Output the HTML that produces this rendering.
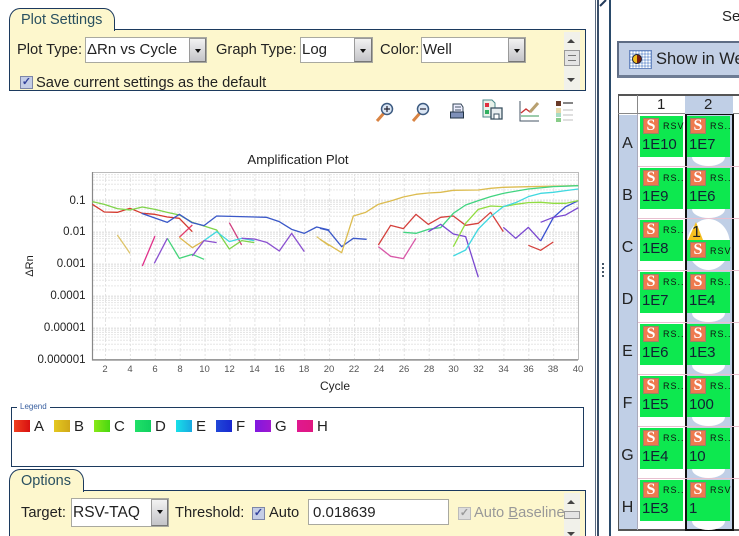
<!DOCTYPE html>
<html><head><meta charset="utf-8"><style>
html,body{margin:0;padding:0;background:#fff}
#p{position:relative;width:739px;height:536px;overflow:hidden;background:#fff;font-family:"Liberation Sans",sans-serif;color:#222;font-size:14.7px}
#p div,#p span.a{position:absolute;white-space:nowrap;box-sizing:border-box}
.panel{background:#fdf7cd;border:1px solid #1c3a5e}
.tab{background:#fdf7cd;border:1px solid #1c3a5e;border-bottom:none;border-radius:11px 11px 0 0/12px 12px 0 0;color:#2a5060;padding:3px 0 0 11px;font-size:14.5px}
.combo{background:#fff;border:1px solid #a9a9a0;padding:3px 0 0 1px;font-size:15px;color:#222}
.btn{background:linear-gradient(#f2f2f2,#c4c4c8);border:1px solid #9a9a9a;border-right-color:#777;border-bottom-color:#777}
.btn:after{content:"";position:absolute;left:5px;top:10px;border:3px solid transparent;border-top:4px solid #111}
.chk{width:13px;height:13px;background:#c4cde6;border:1px solid #7d86a8;color:#33429a;font-size:11px;line-height:11px;text-align:center;font-weight:bold}
.t{font-size:14.7px;color:#222}
.sw{width:16px;height:12px}
.well{background:#0de84f;width:43px;height:41px}
.s{width:16px;height:16px;left:3px;top:2px;background:#ee7a4f;border:1px solid #a08068;color:#fff;font:bold 16px/14px "Liberation Serif",serif;text-align:center}
.r{left:23px;top:5px;font-size:9px;letter-spacing:1px;color:#111}
.n{left:2px;top:20px;font-size:15px;letter-spacing:-.1px;color:#123}
.hole{width:33px;height:9px;background:#fff;border-radius:0 0 50% 50%/0 0 100% 100%}
.row{font-size:16px;color:#222;left:618px;width:19px;text-align:center}
</style></head><body><div id="p">

<!-- Plot settings -->
<div class="tab" style="left:9px;top:8px;width:106px;height:23px;z-index:2">Plot Settings</div>
<div class="panel" style="left:9px;top:29px;width:577px;height:62px;overflow:hidden">
 <div class="t" style="left:7px;top:12px">Plot Type:</div>
 <div class="combo" style="left:75px;top:7px;width:122px;height:26px">ΔRn vs Cycle</div>
 <div class="btn" style="left:179px;top:8px;width:17px;height:24px"></div>
 <div class="t" style="left:206px;top:12px">Graph Type:</div>
 <div class="combo" style="left:290px;top:7px;width:73px;height:26px">Log</div>
 <div class="btn" style="left:344px;top:8px;width:18px;height:24px"></div>
 <div class="t" style="left:370px;top:12px">Color:</div>
 <div class="combo" style="left:411px;top:7px;width:105px;height:26px">Well</div>
 <div class="btn" style="left:498px;top:8px;width:17px;height:24px"></div>
 <div class="chk" style="left:10px;top:46px">✓</div>
 <div class="t" style="left:26px;top:45px">Save current settings as the default</div>
 <div style="left:554px;top:2px;width:16px;height:58px;background:#f1f1ea"></div>
 <div style="left:557px;top:9px;border:4px solid transparent;border-bottom:4px solid #444;border-top:none"></div>
 <div style="left:554px;top:20px;width:16px;height:16px;background:#e4e4e4;border:1px solid #999"></div>
 <div style="left:558px;top:25px;width:8px;height:6px;border-top:1px solid #777;border-bottom:1px solid #777"></div>
 <div style="left:557px;top:48px;border:4px solid transparent;border-top:4px solid #444;border-bottom:none"></div>
</div>

<!-- toolbar icons -->
<svg style="position:absolute;left:370px;top:95px" width="210" height="32" viewBox="0 0 210 32">
 <g fill="none">
  <path d="M7 26L14 18" stroke="#d98444" stroke-width="3"/><circle cx="17" cy="14" r="5.5" fill="#dbe6f4" stroke="#3c5a80" stroke-width="1.5"/><path d="M14 14h6M17 11v6" stroke="#223" stroke-width="1.2"/>
  <path d="M43 26L50 18" stroke="#d98444" stroke-width="3"/><circle cx="53" cy="14" r="5.5" fill="#dbe6f4" stroke="#3c5a80" stroke-width="1.5"/><path d="M50 14h6" stroke="#223" stroke-width="1.2"/>
  <path d="M83 9h8l2 3v5h-10z" fill="#eef" stroke="#345"/><rect x="80.500" y="17" width="13" height="6" fill="#7e90b8" stroke="#234"/><path d="M85 12h6M85 15h6" stroke="#456"/>
  <path d="M113 5h9l3 3v14h-12z" fill="#e8f2ea" stroke="#4a8a8a"/><rect x="115" y="8" width="4" height="4" fill="#e03040"/><rect x="115" y="15" width="4" height="4" fill="#30b060"/>
  <rect x="121" y="13" width="11" height="11" fill="#e8eef0" stroke="#3a5060" stroke-width="1.3"/><rect x="124" y="19" width="5" height="5" fill="#fff" stroke="#3a5060"/>
  <path d="M150 6v20h19" stroke="#456" stroke-width="1"/><path d="M151 21h18" stroke="#3a9a5a"/><path d="M151 18l5-4 4 3 3-2" stroke="#c83030" stroke-width="1.3"/><path d="M160 17l8-9" stroke="#b8a070" stroke-width="3"/>
  <rect x="186" y="6" width="5" height="5" fill="#6a3a28" stroke="none"/><rect x="186" y="13" width="5" height="5" fill="#e6d8a8" stroke="none"/><rect x="186" y="18" width="5" height="4" fill="#a8dcc4" stroke="none"/><rect x="186" y="23" width="5" height="4" fill="#88cc88" stroke="none"/>
  <path d="M193 8h10" stroke="#333" stroke-width="1.2"/><path d="M193 15h10M193 20h10M193 25h10" stroke="#ccc" stroke-width="1.2"/>
 </g>
</svg>

<!-- plot -->
<svg style="position:absolute;left:0;top:150px" width="596" height="250" viewBox="0 150 596 250" font-family="Liberation Sans, sans-serif" font-size="11.5" fill="#222">
 <defs>
  <pattern id="gy" patternUnits="userSpaceOnUse" x="0" y="199.5" width="6" height="32">
   <g stroke="#e6e6e6" stroke-width="1" stroke-dasharray="2 1">
    <path d="M0 0.5H6M0 1.5H6M0 3.1H6M0 5H6M0 7.1H6M0 9.6H6M0 12.7H6M0 16.7H6M0 22.4H6"/>
   </g>
  </pattern>
  <pattern id="gx" patternUnits="userSpaceOnUse" x="105" y="0" width="24.9" height="10">
   <path d="M0.5 0V10" stroke="#e2e2e2" stroke-dasharray="2 2"/>
  </pattern>
 </defs>
 <rect x="93" y="172" width="485" height="187" fill="url(#gy)"/>
 <rect x="93" y="172" width="485" height="187" fill="url(#gx)"/>
 <path d="M92.5 172.5H578.5V359.5H92.5Z" fill="none" stroke="#bbb"/>
 <path d="M92.5 172V360H578" fill="none" stroke="#888" stroke-width="1.2"/>
 <g text-anchor="end">
  <text x="85.500" y="204">0.1</text><text x="85.500" y="235">0.01</text><text x="85.500" y="267">0.001</text><text x="85.500" y="299">0.0001</text><text x="85.500" y="331">0.00001</text><text x="85.500" y="363">0.000001</text>
 </g>
 <g text-anchor="middle" font-size="9.5" fill="#555">
  <text x="105" y="372">2</text><text x="130" y="372">4</text><text x="155" y="372">6</text><text x="180" y="372">8</text><text x="204.500" y="372">10</text><text x="229.500" y="372">12</text><text x="254.500" y="372">14</text><text x="279.500" y="372">16</text><text x="304" y="372">18</text><text x="329" y="372">20</text><text x="354" y="372">22</text><text x="379" y="372">24</text><text x="404" y="372">26</text><text x="429" y="372">28</text><text x="453.500" y="372">30</text><text x="478.500" y="372">32</text><text x="503.500" y="372">34</text><text x="528.500" y="372">36</text><text x="553" y="372">38</text><text x="578" y="372">40</text>
 </g>
 <text x="335" y="390" text-anchor="middle" font-size="12">Cycle</text>
 <text x="298" y="164" text-anchor="middle" font-size="13.200">Amplification Plot</text>
 <text transform="translate(33,266) rotate(-90)" text-anchor="middle" font-size="11">ΔRn</text>
 <g fill="none" stroke-width="3.900" transform="translate(60,150) scale(.3333)" style="stroke-linejoin:round">
  <polyline stroke="#d4392e" points="97,163 133,186 172,187 210,175 247,190 285,193 322,201 358,205 397,245"/>
  <polyline stroke="#e23c6a" points="358,262 397,225"/>
  <polyline stroke="#e0308a" points="247,348 285,258"/>
  <polyline stroke="#d04080" points="508,218 545,285"/>
  <polyline stroke="#ddc46a" points="172,255 210,310"/>
  <polyline stroke="#dcb850" points="358,262 397,293 432,272"/>
  <polyline stroke="#ddc46a" points="770,260 808,288"/>
  <polyline stroke="#7fd44a" points="97,155 133,163 172,176 210,180 247,171 285,178 322,187 358,195 397,217 432,228 470,240 508,297 545,272 583,278"/>
  <polyline stroke="#44d47a" points="322,265 358,325 397,313 432,328"/>
  <polyline stroke="#40d8e0" points="432,272 470,245 508,275 545,265 583,272"/>
  <polyline stroke="#3a58c8" points="245,190 322,217 358,193 396,218 432,227 470,198 620,202 658,215 695,238 733,250 770,231 808,240"/>
  <polyline stroke="#8a50d0" points="283,340 322,265"/>
  <polyline stroke="#8a50d0" points="397,318 432,272 470,278"/>
  <polyline stroke="#8a50d0" points="545,265 583,267 620,277 658,303 695,250 733,305"/>
 </g>
 <g fill="none" stroke-width="3.900" transform="translate(320,150) scale(.3333)" style="stroke-linejoin:round">
  <polyline stroke="#3a58c8" points="0,235 25,241 65,290 100,265 140,268"/>
  <polyline stroke="#dcbc50" points="0,268 65,308 100,198 137,187 175,163 212,153 250,141 288,133 325,129 362,127 400,121 475,120 512,115 550,112 625,110 775,107"/>
  <polyline stroke="#d4403c" points="175,285 212,226 250,236 288,193 325,223 362,202 400,198 437,226 475,220 512,187 550,245"/>
  <polyline stroke="#d4403c" points="625,286 662,301 700,276"/>
  <polyline stroke="#d858a8" points="175,290 212,319 250,326 288,265"/>
  <polyline stroke="#40d480" points="250,247 288,250 325,238 362,233 400,190 437,165 475,152 512,140 550,130 625,117 700,110 775,107"/>
  <polyline stroke="#7a48d0" points="325,245 362,223 400,252 437,260 475,382"/>
  <polyline stroke="#7a48d0" points="550,232 587,265 625,232 662,273"/>
  <polyline stroke="#3a50d0" points="662,273 700,203 737,170 775,152"/>
  <polyline stroke="#7a48d0" points="662,217 700,202 737,195 775,173"/>
  <polyline stroke="#90dc40" points="400,290 437,220 475,178 512,168 550,170 587,163 625,158 662,157 700,160 737,160 775,152"/>
  <polyline stroke="#40d8e0" points="400,318 437,300 475,237 512,200 550,170 587,158 625,140 662,130 700,127 737,122 775,117"/>
 </g>
</svg>

<!-- legend -->
<div style="left:11px;top:407px;width:573px;height:60px;border:1px solid #1c3a5e"></div>
<div style="left:17px;top:402px;background:#fff;padding:0 3px;font-size:8px;color:#3a60a0">Legend</div>
<div class="sw" style="left:14px;top:420px;background:linear-gradient(90deg,#f04020,#d81010)"></div><div class="t" style="left:34px;top:418px;font-size:15px">A</div>
<div class="sw" style="left:54px;top:420px;background:linear-gradient(90deg,#e4c820,#d0a818)"></div><div class="t" style="left:74px;top:418px;font-size:15px">B</div>
<div class="sw" style="left:94px;top:420px;background:linear-gradient(90deg,#88e818,#48d810)"></div><div class="t" style="left:114px;top:418px;font-size:15px">C</div>
<div class="sw" style="left:135px;top:420px;background:linear-gradient(90deg,#20e068,#10d060)"></div><div class="t" style="left:155px;top:418px;font-size:15px">D</div>
<div class="sw" style="left:176px;top:420px;background:linear-gradient(90deg,#18e0e8,#18a8e0)"></div><div class="t" style="left:196px;top:418px;font-size:15px">E</div>
<div class="sw" style="left:216px;top:420px;background:linear-gradient(90deg,#2048d8,#1828d0)"></div><div class="t" style="left:236px;top:418px;font-size:15px">F</div>
<div class="sw" style="left:255px;top:420px;background:linear-gradient(90deg,#8018e0,#a018d0)"></div><div class="t" style="left:275px;top:418px;font-size:15px">G</div>
<div class="sw" style="left:297px;top:420px;background:linear-gradient(90deg,#e01890,#e01880)"></div><div class="t" style="left:317px;top:418px;font-size:15px">H</div>

<!-- Options -->
<div class="tab" style="left:9px;top:469px;width:75px;height:23px;z-index:2">Options</div>
<div class="panel" style="left:9px;top:490px;width:577px;height:60px">
 <div class="t" style="left:11px;top:14px">Target:</div>
 <div class="combo" style="left:61px;top:7px;width:98px;height:29px;padding:5px 0 0 1px;font-size:15.500px">RSV-TAQ</div>
 <div class="btn" style="left:141px;top:8px;width:17px;height:27px"></div>
 <div class="t" style="left:165px;top:14px">Threshold:</div>
 <div class="chk" style="left:242px;top:16px">✓</div>
 <div class="t" style="left:259px;top:14px">Auto</div>
 <div class="combo" style="left:298px;top:8px;width:141px;height:26px;padding:4px 0 0 4px">0.018639</div>
 <div class="chk" style="left:448px;top:16px;background:#ddd;border-color:#bbb;color:#999">✓</div>
 <div class="t" style="left:464px;top:14px;color:#999">Auto <u>B</u>aseline</div>
 <div style="left:554px;top:2px;width:16px;height:58px;background:#f1f1ea"></div>
 <div style="left:557px;top:9px;border:4px solid transparent;border-bottom:4px solid #444;border-top:none"></div>
 <div style="left:554px;top:20px;width:16px;height:8px;background:#e4e4e4;border:1px solid #999"></div>
 <div style="left:557px;top:41px;border:4px solid transparent;border-top:4px solid #444;border-bottom:none"></div>
</div>

<!-- divider -->
<div style="left:595px;top:0;width:1px;height:536px;background:#5a6a80"></div>
<div style="left:597px;top:0;width:2px;height:536px;background:#3a4f6a"></div>
<div style="left:609px;top:0;width:2px;height:536px;background:#2a4a6a"></div>
<svg style="position:absolute;left:599px;top:0" width="10" height="8"><path d="M1 6L7 0" stroke="#223a5a" stroke-width="2"/></svg>
<div style="left:602px;top:263px;width:2px;height:2px;background:#456"></div>
<div style="left:602px;top:267px;width:2px;height:2px;background:#456"></div>
<div style="left:602px;top:271px;width:2px;height:2px;background:#456"></div>
<div style="left:602px;top:275px;width:2px;height:2px;background:#456"></div>

<!-- right panel -->
<div style="left:722px;top:8px;font-size:15px;color:#222">Se</div>
<div style="left:617px;top:41px;width:130px;height:37px;background:#c3d0e6;border:2px solid #5e6c84;border-bottom:3px solid #6e7c94"></div>
<div style="left:629px;top:50px;width:23px;height:19px;background:#9fb8e0;border:1px solid #6a88c0;background-image:radial-gradient(#fff 1px,transparent 1px);background-size:3px 3px"></div>
<div style="left:632px;top:54px;width:10px;height:10px;border-radius:50%;background:linear-gradient(90deg,#f2c020 50%,#7a2010 50%);border:1px solid #223"></div>
<div style="left:656px;top:50px;font-size:16.500px;color:#222">Show in We</div>

<!-- plate -->
<div style="left:618px;top:94px;width:125px;height:437px;border:1px solid #555;border-width:2px 0 2px 1px"></div>
<div style="left:618px;top:113px;width:121px;height:1px;background:#888"></div>
<div style="left:637px;top:95px;width:1px;height:19px;background:#888"></div>
<div style="left:685px;top:96px;width:48px;height:18px;background:#c0cfe6"></div>
<div style="left:657px;top:96px;font-size:15px">1</div>
<div style="left:704px;top:96px;font-size:15px">2</div>
<div style="left:619px;top:115px;width:18px;height:414px;background:#c0cfe6"></div>
<div style="left:637px;top:114px;width:1px;height:416px;background:#aab"></div>
<div style="left:685px;top:114px;width:49px;height:417px;background:#c0cfe6;border:solid #111;border-width:1px 2px 2px 2px"></div>

<div style="left:638px;top:166px;width:101px;height:1px;background:#e8c0d0"></div>
<div style="left:638px;top:218px;width:101px;height:1px;background:#e8c0d0"></div>
<div style="left:638px;top:270px;width:101px;height:1px;background:#e8c0d0"></div>
<div style="left:638px;top:322px;width:101px;height:1px;background:#e8c0d0"></div>
<div style="left:638px;top:374px;width:101px;height:1px;background:#e8c0d0"></div>
<div style="left:638px;top:426px;width:101px;height:1px;background:#e8c0d0"></div>
<div style="left:638px;top:478px;width:101px;height:1px;background:#e8c0d0"></div>

<div class="row" style="top:135px">A</div><div class="row" style="top:187px">B</div><div class="row" style="top:239px">C</div><div class="row" style="top:291px">D</div><div class="row" style="top:343px">E</div><div class="row" style="top:395px">F</div><div class="row" style="top:447px">G</div><div class="row" style="top:499px">H</div>

<!-- holes col 2 -->
<div class="hole" style="left:692px;top:157px"></div>
<div class="hole" style="left:692px;top:209px"></div>
<div class="hole" style="left:692px;top:313px"></div>
<div class="hole" style="left:692px;top:365px"></div>
<div class="hole" style="left:692px;top:417px"></div>
<div class="hole" style="left:692px;top:469px"></div>
<div class="hole" style="left:692px;top:521px"></div>
<div style="left:687px;top:219px;width:43px;height:51px;border-radius:50%;background:#fff"></div>

<!-- col 1 wells -->
<div class="well" style="left:640px;top:116px"><div class="s">S</div><div class="r">RSV</div><div class="n">1E10</div></div>
<div class="well" style="left:640px;top:168px"><div class="s">S</div><div class="r">RS..</div><div class="n">1E9</div></div>
<div class="well" style="left:640px;top:220px"><div class="s">S</div><div class="r">RS..</div><div class="n">1E8</div></div>
<div class="well" style="left:640px;top:272px"><div class="s">S</div><div class="r">RS..</div><div class="n">1E7</div></div>
<div class="well" style="left:640px;top:324px"><div class="s">S</div><div class="r">RS..</div><div class="n">1E6</div></div>
<div class="well" style="left:640px;top:376px"><div class="s">S</div><div class="r">RS..</div><div class="n">1E5</div></div>
<div class="well" style="left:640px;top:428px"><div class="s">S</div><div class="r">RS..</div><div class="n">1E4</div></div>
<div class="well" style="left:640px;top:480px"><div class="s">S</div><div class="r">RS..</div><div class="n">1E3</div></div>
<!-- col 2 wells -->
<div class="well" style="left:687px;top:116px"><div class="s">S</div><div class="r">RS..</div><div class="n">1E7</div></div>
<div class="well" style="left:687px;top:168px"><div class="s">S</div><div class="r">RS..</div><div class="n">1E6</div></div>
<svg style="position:absolute;left:687px;top:219px" width="20" height="22"><path d="M1 21L9 3L16 21Z" fill="#f6c020"/></svg>
<div style="left:692px;top:224px;font-size:16px;color:#222">1</div>
<div class="well" style="left:687px;top:240px;height:21px"><div class="s">S</div><div class="r" style="top:6px">RSV</div></div>
<div class="well" style="left:687px;top:272px"><div class="s">S</div><div class="r">RS..</div><div class="n">1E4</div></div>
<div class="well" style="left:687px;top:324px"><div class="s">S</div><div class="r">RS..</div><div class="n">1E3</div></div>
<div class="well" style="left:687px;top:376px"><div class="s">S</div><div class="r">RS..</div><div class="n">100</div></div>
<div class="well" style="left:687px;top:428px"><div class="s">S</div><div class="r">RS..</div><div class="n">10</div></div>
<div class="well" style="left:687px;top:480px"><div class="s">S</div><div class="r">RSV</div><div class="n">1</div></div>

</div></body></html>
